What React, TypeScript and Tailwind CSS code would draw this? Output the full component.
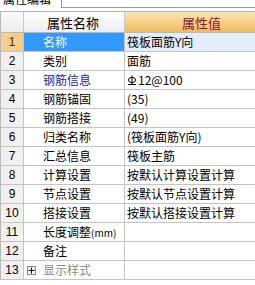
import React from "react";

type Row = { n: number; name: string; value: React.ReactNode; nameClass?: string };

const RebarSymbol = () => (
  <svg width="10" height="12" viewBox="0 0 10 12" className="mr-[1px]">
    <ellipse cx="5" cy="6" rx="3.6" ry="2.6" fill="none" stroke="#000" strokeWidth="1" />
    <path d="M5 1.5V10.5M1 10.5H9" stroke="#000" strokeWidth="1" fill="none" />
  </svg>
);

const rows: Row[] = [
  { n: 1, name: "名称", value: "筏板面筋Y向" },
  { n: 2, name: "类别", value: "面筋" },
  {
    n: 3,
    name: "钢筋信息",
    value: (
      <span className="flex items-center">
        <RebarSymbol />
        12@100
      </span>
    ),
    nameClass: "text-[#1c1ca8]",
  },
  { n: 4, name: "钢筋锚固", value: "(35)" },
  { n: 5, name: "钢筋搭接", value: "(49)" },
  { n: 6, name: "归类名称", value: "(筏板面筋Y向)" },
  { n: 7, name: "汇总信息", value: "筏板主筋" },
  { n: 8, name: "计算设置", value: "按默认计算设置计算" },
  { n: 9, name: "节点设置", value: "按默认节点设置计算" },
  { n: 10, name: "搭接设置", value: "按默认搭接设置计算" },
  { n: 11, name: "长度调整(mm)", value: "" },
  { n: 12, name: "备注", value: "" },
];

export default function App() {
  return (
    <div className="w-[255px] h-[285px] overflow-hidden bg-white text-[12px] leading-none text-black font-['Noto_Sans_CJK_SC',sans-serif]">
      {/* tab strip */}
      <div className="flex h-[11px]">
        <div className="w-[61px] h-[11px] overflow-hidden relative">
          <div className="absolute left-[3px] top-[-8px] text-[12px] leading-[14px] whitespace-nowrap">属性编辑</div>
        </div>
        <div className="flex-1 flex">
          <div className="w-px h-[8px] bg-[#9a9a9a]" />
          <div className="flex-1 h-[8px] border-b border-[#9a9a9a]" />
        </div>
      </div>
      {/* table */}
      <div className="w-[278px] border-l border-t border-[#b9b9b9]">
        {/* header */}
        <div className="flex h-[21px] border-b border-[#b9b9b9]">
          <div className="w-[23px] border-r border-[#c8c8c8] bg-gradient-to-b from-[#fafafa] to-[#ececec]" />
          <div className="w-[101px] border-r border-[#c8c8c8] bg-gradient-to-b from-[#ffffff] to-[#ededed] flex items-center justify-center text-[13px]">
            <span className="-ml-[2px]">属性名称</span>
          </div>
          <div className="flex-1 bg-gradient-to-b from-[#fce7b3] to-[#f0ba5a] flex items-center justify-center text-[13px] text-[#8e1438]">
            属性值
          </div>
        </div>
        {rows.map((r) => {
          const sel = r.n === 1;
          return (
            <div key={r.n} className="flex h-[19px] border-b border-[#c4c4c4]">
              <div
                className={`w-[23px] border-r border-[#c4c4c4] flex items-center justify-center text-[12px] font-['Liberation_Sans',sans-serif] ${
                  sel ? "bg-[#fbcd8c] text-[#5a2a00]" : "bg-[#f0f0f0]"
                }`}
              >
                {r.n}
              </div>
              <div
                className={`w-[101px] border-r border-[#c4c4c4] flex items-center pl-[19px] whitespace-nowrap ${
                  sel ? "bg-[#3399ff] text-white" : "bg-white"
                } ${r.nameClass ?? ""}`}
              >
                {r.n === 11 ? (
                  <span>
                    长度调整<span className="text-[10px]">(mm)</span>
                  </span>
                ) : (
                  r.name
                )}
              </div>
              <div className={`flex-1 flex items-center pl-[2px] whitespace-nowrap ${sel ? "bg-[#e4eefa]" : "bg-white"}`}>
                {r.value}
              </div>
            </div>
          );
        })}
        <div className="flex h-[19px] border-b border-[#c4c4c4]">
          <div className="w-[23px] border-r border-[#c4c4c4] bg-[#f0f0f0] flex items-center justify-center text-[12px] font-['Liberation_Sans',sans-serif]">
            13
          </div>
          <div className="w-[101px] border-r border-[#c4c4c4] flex items-center bg-white whitespace-nowrap">
            <div className="ml-[3px] w-[9px] h-[9px] border border-[#8c8c8c] bg-[#f4f4f4] flex items-center justify-center">
              <svg width="7" height="7" viewBox="0 0 7 7">
                <path d="M0.5 3.5H6.5M3.5 0.5V6.5" stroke="#000" strokeWidth="1" />
              </svg>
            </div>
            <span className="ml-[7px] text-[#8a8a8a]">显示样式</span>
          </div>
          <div className="flex-1 bg-white" />
        </div>
      </div>
    </div>
  );
}
